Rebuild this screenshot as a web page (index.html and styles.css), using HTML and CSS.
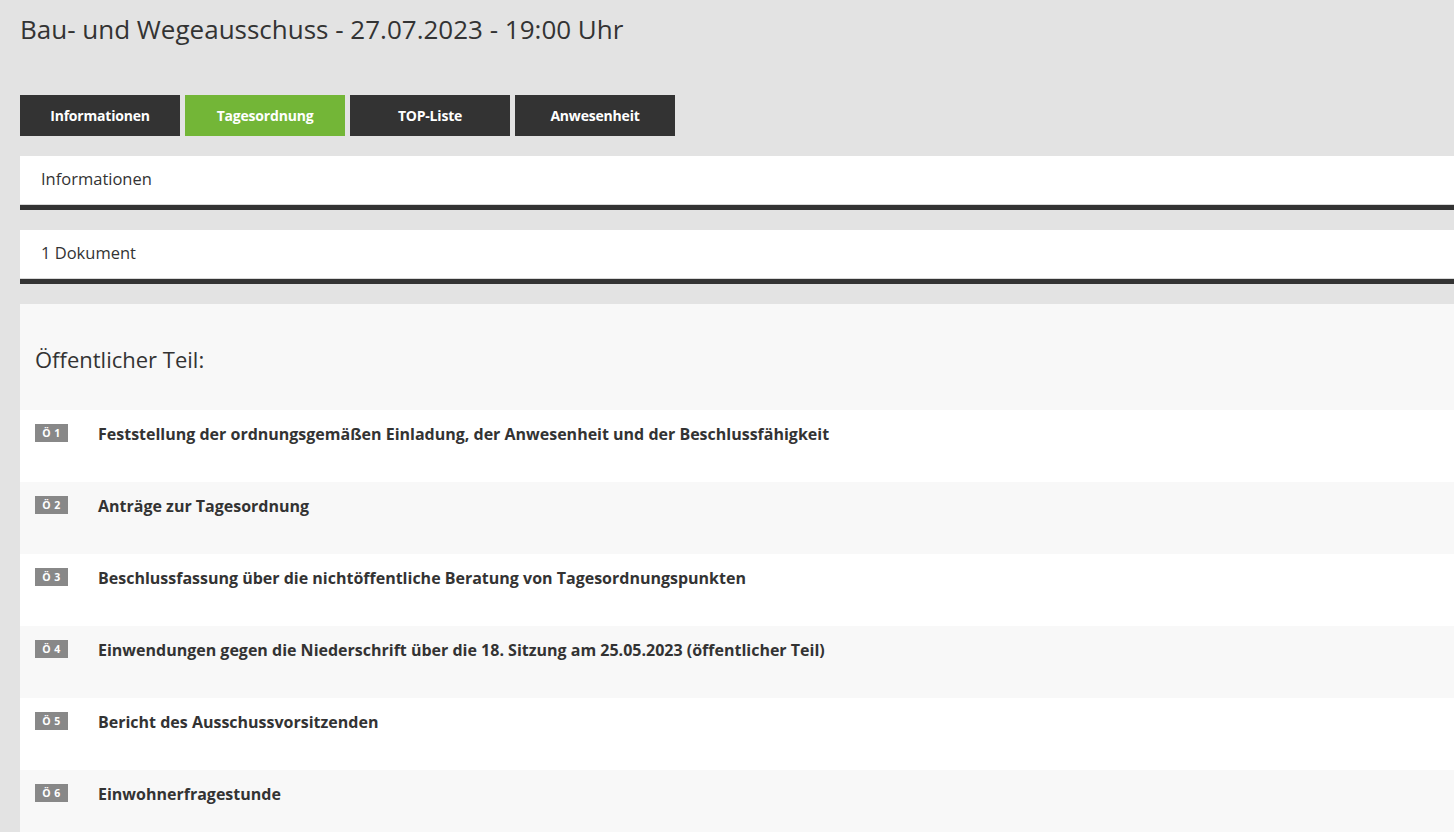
FILE: index.html
```html
<!DOCTYPE html>
<html lang="de">
<head>
<meta charset="utf-8">
<title>Bau- und Wegeausschuss</title>
<link rel="stylesheet" href="styles.css">
</head>
<body>
<div class="page">
  <h1 class="title">Bau- und Wegeausschuss - 27.07.2023 - 19:00 Uhr</h1>
  <nav class="tabs">
    <a class="tab">Informationen</a>
    <a class="tab active">Tagesordnung</a>
    <a class="tab">TOP-Liste</a>
    <a class="tab">Anwesenheit</a>
  </nav>
  <div class="panel"><span class="panel-text">Informationen</span></div>
  <div class="panel"><span class="panel-text">1 Dokument</span></div>
  <section class="agenda">
    <h2 class="agenda-head">Öffentlicher Teil:</h2>
    <div class="item"><span class="badge">Ö 1</span><span class="item-title">Feststellung der ordnungsgemäßen Einladung, der Anwesenheit und der Beschlussfähigkeit</span></div>
    <div class="item alt"><span class="badge">Ö 2</span><span class="item-title">Anträge zur Tagesordnung</span></div>
    <div class="item"><span class="badge">Ö 3</span><span class="item-title">Beschlussfassung über die nichtöffentliche Beratung von Tagesordnungspunkten</span></div>
    <div class="item alt"><span class="badge">Ö 4</span><span class="item-title">Einwendungen gegen die Niederschrift über die 18. Sitzung am 25.05.2023 (öffentlicher Teil)</span></div>
    <div class="item"><span class="badge">Ö 5</span><span class="item-title">Bericht des Ausschussvorsitzenden</span></div>
    <div class="item alt"><span class="badge">Ö 6</span><span class="item-title">Einwohnerfragestunde</span></div>
  </section>
</div>
</body>
</html>
```
FILE: styles.css
```css
html, body {
  margin: 0;
  padding: 0;
}
body {
  background: #e3e3e3;
  font-family: "Open Sans", "Liberation Sans", sans-serif;
  color: #333;
  overflow: hidden;
}
.page {
  padding-left: 20px;
}
.title {
  margin: 0;
  padding-top: 11px;
  height: 95px;
  box-sizing: border-box;
  font-size: 26px;
  font-weight: 400;
  line-height: 36px;
  color: #333;
}
.tabs {
  display: flex;
  gap: 5px;
  margin-bottom: 20px;
}
.tab {
  width: 160px;
  height: 41px;
  background: #333;
  color: #fff;
  font-weight: 700;
  font-size: 14px;
  display: flex;
  align-items: center;
  justify-content: center;
  letter-spacing: -0.2px;
}
.tab.active {
  background: #73b637;
}
.panel {
  background: #fff;
  height: 48px;
  display: flex;
  align-items: center;
  padding-left: 21px;
  font-size: 16.5px;
  box-shadow: inset 0 -1px 0 #d8d8d8;
  border-bottom: 5px solid #333;
  margin-bottom: 20px;
  box-sizing: content-box;
  padding-bottom: 1px;
}
.panel-text {
  margin-bottom: 3px;
}
.agenda {
  background: #f8f8f8;
}
.agenda-head {
  margin: 0;
  height: 106px;
  box-sizing: border-box;
  padding: 40px 0 0 15px;
  font-size: 22px;
  font-weight: 400;
  line-height: 30px;
}
.item {
  display: flex;
  align-items: flex-start;
  height: 72px;
  box-sizing: border-box;
  padding: 14px 0 0 15px;
  background: #fff;
}
.item.alt {
  background: #f8f8f8;
}
.badge {
  width: 33px;
  height: 18px;
  background: #888;
  color: #fff;
  font-size: 10.5px;
  font-weight: 700;
  letter-spacing: 0.5px;
  display: flex;
  align-items: center;
  justify-content: center;
  margin-right: 30px;
  flex: none;
}
.item-title {
  font-size: 16px;
  font-weight: 700;
  line-height: 20px;
  color: #333;
}
```
